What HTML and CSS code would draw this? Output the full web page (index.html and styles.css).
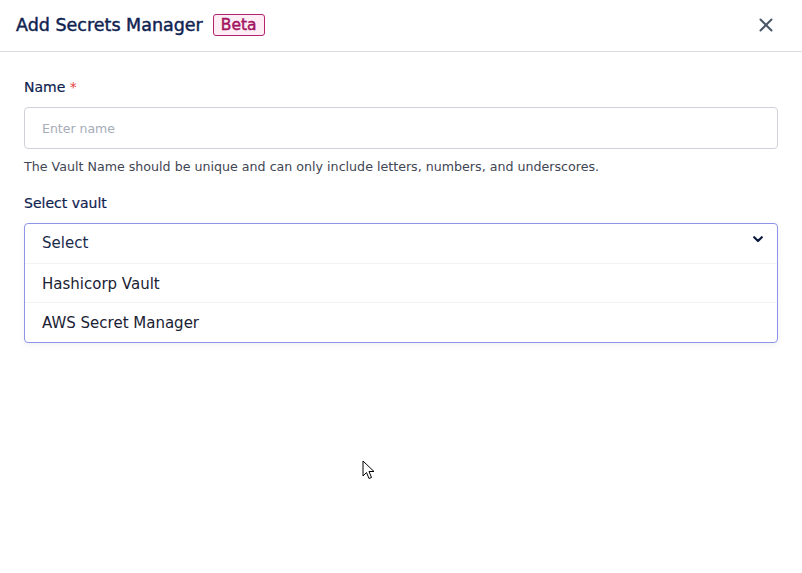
FILE: index.html
```html
<!DOCTYPE html>
<html>
<head>
<meta charset="utf-8">
<link rel="stylesheet" href="styles.css">
</head>
<body>
<div class="modal">
  <header class="head">
    <div class="title">
      <h1>Add Secrets Manager</h1>
      <span class="badge">Beta</span>
    </div>
    <button class="close" aria-label="Close">
      <svg width="14" height="14" viewBox="0 0 14 14"><path d="M1.5 1.5 L12.5 12.5 M12.5 1.5 L1.5 12.5" stroke="#4a5568" stroke-width="2" stroke-linecap="round"/></svg>
    </button>
  </header>
  <div class="body">
    <div class="field">
      <label class="label">Name <span class="req">*</span></label>
      <div class="input">Enter name</div>
      <p class="help">The Vault Name should be unique and can only include letters, numbers, and underscores.</p>
    </div>
    <div class="field">
      <label class="label">Select vault</label>
      <div class="select">
        <div class="sel-head">
          <span>Select</span>
          <svg width="10" height="7" viewBox="0 0 10 7"><path d="M1.2 1.2 L5 5 L8.8 1.2" fill="none" stroke="#0c1a3d" stroke-width="2.2" stroke-linecap="round" stroke-linejoin="round"/></svg>
        </div>
        <div class="opt">Hashicorp Vault</div>
        <div class="opt">AWS Secret Manager</div>
      </div>
    </div>
  </div>
  <svg class="cursor" width="14" height="21" viewBox="0 0 14 21"><path d="M1 1 L1 16 L4.5 12.5 L7 18.5 L9.5 17.5 L7 11.5 L12 11.5 Z" fill="#fff" stroke="#000" stroke-width="1"/></svg>
</div>
</body>
</html>
```
FILE: styles.css
```css
* { box-sizing: border-box; }
body { margin: 0; background: #fff; font-family: "DejaVu Sans", "Open Sans", sans-serif; }
.modal { position: relative; width: 802px; height: 573px; }
.head { height: 52px; border-bottom: 1px solid #d9dce1; display: flex; align-items: center; justify-content: space-between; padding: 0 29px 2px 16px; }
.title { display: flex; align-items: center; gap: 10px; }
.title h1 { margin: 0; font-size: 17.5px; font-weight: normal; -webkit-text-stroke: 0.45px #0f2350; color: #0f2350; }
.badge { font-size: 15.5px; font-weight: normal; -webkit-text-stroke: 0.45px #a3135f; color: #a3135f; background: #fdeef6; border: 1px solid #b5226f; border-radius: 3px; padding: 0 7px; line-height: 20px; }
.close { background: none; border: 0; padding: 0; width: 14px; height: 14px; display: flex; }
.body { padding: 26px 24px 0; display: flex; flex-direction: column; gap: 19px; }
.field { display: flex; flex-direction: column; }
.label { font-size: 14px; color: #0f2350; -webkit-text-stroke: 0.2px #0f2350; line-height: 18px; margin-bottom: 11px; }
.req { color: #e53e3e; -webkit-text-stroke: 0; }
.input { height: 42px; border: 1px solid #cfd3d9; border-radius: 4px; padding: 0 17px; display: flex; align-items: center; font-size: 12.5px; color: #a6acb8; }
.help { margin: 10px 0 0; font-size: 12.65px; color: #3f4654; line-height: 16px; white-space: nowrap; }
.select { border: 1px solid #8d94ea; border-radius: 4px; box-shadow: 0 2px 6px rgba(0,0,0,0.06); }
.sel-head { height: 40px; display: flex; align-items: center; justify-content: space-between; padding: 0 14px 2px 17px; font-size: 15px; color: #1a2b4a; border-bottom: 1px solid #f2f3f5; }
.sel-head svg { margin-top: -6px; }
.opt { height: 39px; display: flex; align-items: center; padding: 1px 17px 0; font-size: 15px; color: #1a2233; border-bottom: 1px solid #f2f3f5; }
.opt:last-child { border-bottom: 0; }
.cursor { position: absolute; left: 362px; top: 460px; }
```
